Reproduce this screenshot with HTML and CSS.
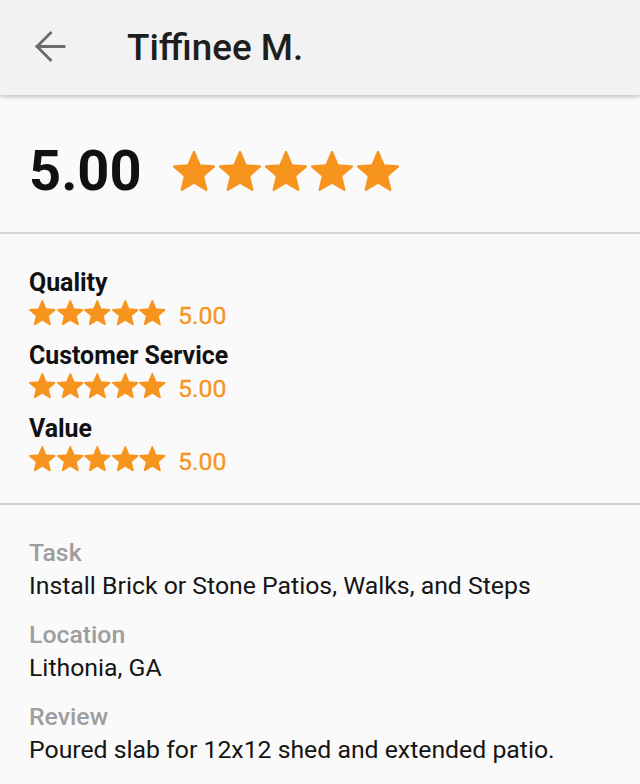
FILE: index.html
```html
<!DOCTYPE html>
<html>
<head>
<meta charset="utf-8">
<link rel="stylesheet" href="styles.css">
</head>
<body>
<svg width="0" height="0" class="defs">
  <defs>
    <symbol id="star" viewBox="1.4 1.4 21.2 20.2">
      <path d="M12 17.27L18.18 21l-1.64-7.03L22 9.24l-7.19-.61L12 2 9.19 8.63 2 9.24l5.46 4.73L5.82 21z" fill="#f7941d" stroke="#f7941d" stroke-width="1.2" stroke-linejoin="round"/>
    </symbol>
  </defs>
</svg>
<header class="appbar">
  <svg class="back" viewBox="0 0 42 42" width="42" height="42">
    <path d="M35 21.5H8 M21.5 8 L8 21.5 L21.5 35" fill="none" stroke="#6b6b6b" stroke-width="2.8" stroke-linecap="square"/>
  </svg>
  <h1 class="title">Tiffinee M.</h1>
</header>
<main>
  <section class="overall">
    <div class="score">5.00</div>
    <div class="stars big">
      <svg><use href="#star"/></svg><svg><use href="#star"/></svg><svg><use href="#star"/></svg><svg><use href="#star"/></svg><svg><use href="#star"/></svg>
    </div>
  </section>
  <section class="ratings">
    <div class="rating">
      <div class="rlabel">Quality</div>
      <div class="rrow">
        <div class="stars small"><svg><use href="#star"/></svg><svg><use href="#star"/></svg><svg><use href="#star"/></svg><svg><use href="#star"/></svg><svg><use href="#star"/></svg></div>
        <span class="rval">5.00</span>
      </div>
    </div>
    <div class="rating">
      <div class="rlabel">Customer Service</div>
      <div class="rrow">
        <div class="stars small"><svg><use href="#star"/></svg><svg><use href="#star"/></svg><svg><use href="#star"/></svg><svg><use href="#star"/></svg><svg><use href="#star"/></svg></div>
        <span class="rval">5.00</span>
      </div>
    </div>
    <div class="rating">
      <div class="rlabel">Value</div>
      <div class="rrow">
        <div class="stars small"><svg><use href="#star"/></svg><svg><use href="#star"/></svg><svg><use href="#star"/></svg><svg><use href="#star"/></svg><svg><use href="#star"/></svg></div>
        <span class="rval">5.00</span>
      </div>
    </div>
  </section>
  <section class="details">
    <div class="field">
      <div class="flabel">Task</div>
      <div class="fval">Install Brick or Stone Patios, Walks, and Steps</div>
    </div>
    <div class="field">
      <div class="flabel">Location</div>
      <div class="fval">Lithonia, GA</div>
    </div>
    <div class="field">
      <div class="flabel">Review</div>
      <div class="fval">Poured slab for 12x12 shed and extended patio.</div>
    </div>
  </section>
</main>
</body>
</html>
```
FILE: styles.css
```css
* { box-sizing: border-box; }
html, body {
  margin: 0;
  padding: 0;
  background: #fafafa;
  font-family: Roboto, "Liberation Sans", sans-serif;
  color: #111;
}
.defs { position: absolute; width: 0; height: 0; overflow: hidden; }

.appbar {
  height: 95px;
  background: #f2f2f2;
  display: flex;
  align-items: center;
  padding-left: 29px;
  box-shadow: 0 2px 4px rgba(0,0,0,0.22);
  position: relative;
  z-index: 1;
}
.back {
  display: block;
  margin-right: 56px;
  margin-bottom: 4px;
}
.title {
  margin: 0;
  font-size: 36.8px;
  font-weight: 500;
  color: #1e1e1e;
  line-height: 95px;
}

.overall {
  display: flex;
  align-items: center;
  padding: 48px 29px 33px;
  border-bottom: 2px solid #d4d4d4;
}
.score {
  font-size: 56px;
  font-weight: 700;
  line-height: 56px;
  height: 56px;
  color: #111;
}
.stars { display: flex; }
.stars svg { display: block; }
.stars.big { margin-left: 31px; gap: 4px; }
.stars.big svg { width: 42px; height: 40px; }
.stars.small { gap: 1px; }
.stars.small svg { width: 26.6px; height: 25.3px; }

.ratings {
  padding: 35px 29px 28px;
  border-bottom: 2px solid #d4d4d4;
  display: flex;
  flex-direction: column;
  gap: 13px;
}
.rlabel {
  font-size: 24.9px;
  font-weight: 700;
  line-height: 28px;
  color: #111;
}
.rrow {
  display: flex;
  align-items: center;
  height: 32px;
}
.rval {
  font-size: 24.8px;
  line-height: 24px;
  margin-top: 6px;
  margin-left: 12px;
  color: #f7941d;
  -webkit-text-stroke: 0.3px #f7941d;
}

.details {
  padding: 31px 29px 0;
  display: flex;
  flex-direction: column;
  gap: 16px;
}
.flabel {
  font-size: 24.8px;
  font-weight: 500;
  line-height: 33px;
  color: #9e9e9e;
}
.fval {
  font-size: 24.8px;
  line-height: 33px;
  color: #151515;
}
```
